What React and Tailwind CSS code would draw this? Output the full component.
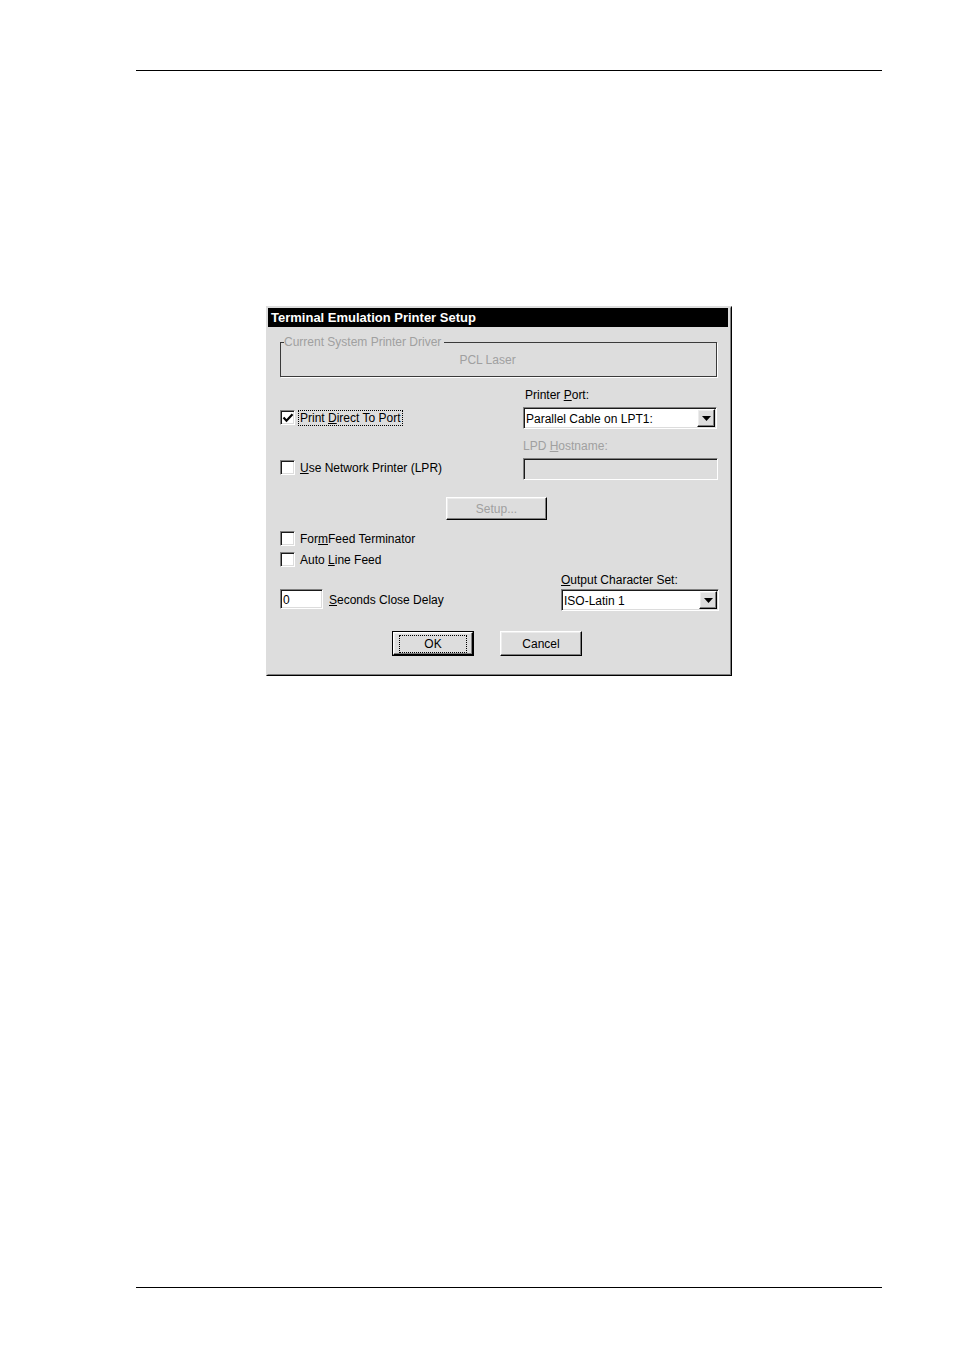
import React from "react";

const sunken =
  "border border-t-[#808080] border-l-[#808080] border-r-white border-b-white shadow-[inset_1px_1px_0_#1a1a1a,inset_-1px_-1px_0_#dcdcdc]";
const raised =
  "border border-t-white border-l-white border-r-black border-b-black shadow-[inset_-1px_-1px_0_#808080,inset_1px_1px_0_#ececec]";

function Check({ checked }) {
  return (
    <span className={`w-[15px] h-[15px] bg-white shrink-0 flex items-center justify-center ${sunken}`}>
      {checked && (
        <svg width="12" height="12" viewBox="0 0 12 12">
          <path d="M1.5 5.5 L4.5 8.7 L10.5 2.3" fill="none" stroke="#000" strokeWidth="2.2" />
        </svg>
      )}
    </span>
  );
}

function Combo({ w, text }) {
  return (
    <div className={`h-[22px] bg-white flex items-center justify-between ${w} ${sunken}`}>
      <span className="pl-[2px] pt-[2px] leading-none">{text}</span>
      <span className={`w-[18px] h-[18px] mr-[1px] bg-[#dddddd] flex items-center justify-center ${raised}`}>
        <svg width="9" height="5" viewBox="0 0 9 5">
          <path d="M0 0 H9 L4.5 5 Z" fill="#000" />
        </svg>
      </span>
    </div>
  );
}

export default function App() {
  return (
    <div className="w-[954px] h-[1352px] bg-white flex flex-col font-['Liberation_Sans',Arial,sans-serif] text-[12px] text-black">
      <div className="ml-[136px] mt-[70px] w-[746px] h-px bg-black" />

      <div className="ml-[266px] mt-[235px] w-[466px] h-[370px] border border-t-[#dddddd] border-l-[#dddddd] border-r-black border-b-black bg-[#dddddd]">
        <div className="w-full h-full border border-t-[#dddddd] border-l-[#dddddd] border-r-[#808080] border-b-[#808080] flex flex-col">
          <div className="h-[19px] bg-black text-white font-bold text-[13px] flex items-center pl-[3px] mr-[2px]">
            Terminal Emulation Printer Setup
          </div>

          <div className="pl-[12px] flex flex-col">
            {/* Group box */}
            <div className="relative mt-[15px] w-[437px] h-[35px] border border-[#3a3a3a] shadow-[1px_1px_0_#ffffff] flex items-center justify-center pr-[22px]">
              <span className="absolute left-[3px] -top-[8px] bg-[#dddddd] pr-[3px] text-[#a0a0a0] leading-[14px]">
                Current System Printer Driver
              </span>
              <span className="text-[#a0a0a0]">PCL Laser</span>
            </div>

            {/* Row A */}
            <div className="mt-[9px] flex">
              <div className="w-[243px] flex items-end pb-[4px]">
                <div className="flex items-center h-[15px]">
                  <Check checked />
                  <span className="ml-[3px] px-[1px] border border-dotted border-black leading-[14px]">
                    Print <u>D</u>irect To Port
                  </span>
                </div>
              </div>
              <div className="flex flex-col">
                <span className="h-[16px] leading-[19px] pl-[2px]">
                  Printer <u>P</u>ort:
                </span>
                <div className="mt-[5px]">
                  <Combo w="w-[194px]" text="Parallel Cable on LPT1:" />
                </div>
              </div>
            </div>

            {/* Row B */}
            <div className="mt-[8px] flex">
              <div className="w-[243px] flex items-end pb-[5px]">
                <div className="flex items-center h-[15px]">
                  <Check />
                  <span className="ml-[5px] leading-[14px]">
                    <u>U</u>se Network Printer (LPR)
                  </span>
                </div>
              </div>
              <div className="flex flex-col">
                <span className="h-[16px] leading-[19px] text-[#a0a0a0]">
                  LPD <u>H</u>ostname:
                </span>
                <div className={`mt-[5px] w-[195px] h-[22px] bg-[#dddddd] ${sunken}`} />
              </div>
            </div>

            {/* Setup button */}
            <div className={`mt-[17px] ml-[166px] w-[101px] h-[23px] flex items-center justify-center pt-[1px] text-[#a0a0a0] bg-[#dddddd] ${raised}`}>
              Setup...
            </div>

            {/* FormFeed */}
            <div className="mt-[11px] flex items-center h-[15px]">
              <Check />
              <span className="ml-[5px] pt-[1px]">
                For<u>m</u>Feed Terminator
              </span>
            </div>
            <div className="mt-[6px] flex items-center h-[15px]">
              <Check />
              <span className="ml-[5px] pt-[1px]">
                Auto <u>L</u>ine Feed
              </span>
            </div>

            {/* Row C */}
            <div className="mt-[4px] flex">
              <div className="w-[281px] flex items-end pb-[2px]">
                <div className="flex items-center">
                  <div className={`w-[43px] h-[20px] bg-white flex items-center pl-[2px] pt-[1px] ${sunken}`}>0</div>
                  <span className="ml-[6px] pt-[2px]">
                    <u>S</u>econds Close Delay
                  </span>
                </div>
              </div>
              <div className="flex flex-col">
                <span className="h-[16px] leading-[19px]">
                  <u>O</u>utput Character Set:
                </span>
                <div className="mt-[2px]">
                  <Combo w="w-[158px]" text="ISO-Latin 1" />
                </div>
              </div>
            </div>

            {/* Buttons */}
            <div className="mt-[20px] ml-[112px] flex">
              <div className="w-[82px] h-[25px] border border-black">
                <div className={`w-full h-full bg-[#dddddd] flex items-center justify-center ${raised}`}>
                  <span className="px-[24px] py-[1px] border border-dotted border-black leading-[14px]">OK</span>
                </div>
              </div>
              <div className={`ml-[26px] w-[82px] h-[25px] bg-[#dddddd] flex items-center justify-center ${raised}`}>
                Cancel
              </div>
            </div>
          </div>
        </div>
      </div>

      <div className="ml-[136px] mt-[611px] w-[746px] h-px bg-black" />
    </div>
  );
}
